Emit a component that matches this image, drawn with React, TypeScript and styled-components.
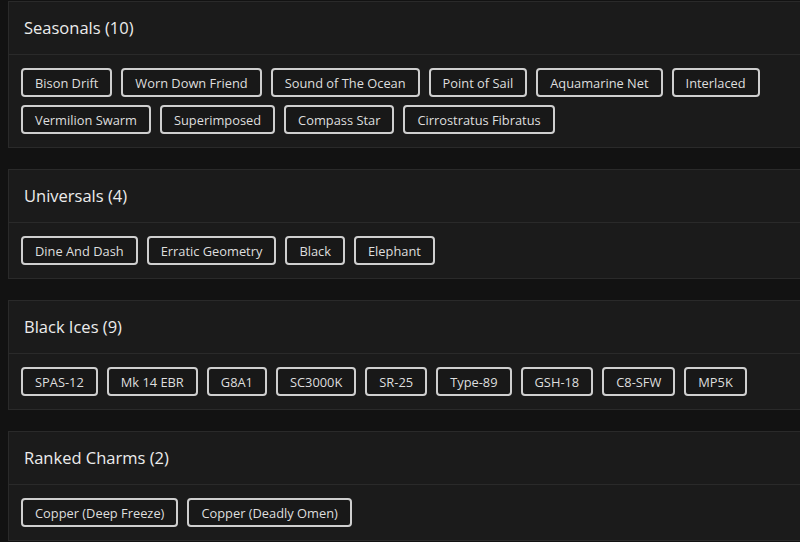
import React from "react";
import styled, { createGlobalStyle } from "styled-components";

type Group = {
  title: string;
  items: string[];
};

const groups: Group[] = [
  {
    title: "Seasonals",
    items: [
      "Bison Drift",
      "Worn Down Friend",
      "Sound of The Ocean",
      "Point of Sail",
      "Aquamarine Net",
      "Interlaced",
      "Vermilion Swarm",
      "Superimposed",
      "Compass Star",
      "Cirrostratus Fibratus",
    ],
  },
  {
    title: "Universals",
    items: ["Dine And Dash", "Erratic Geometry", "Black", "Elephant"],
  },
  {
    title: "Black Ices",
    items: [
      "SPAS-12",
      "Mk 14 EBR",
      "G8A1",
      "SC3000K",
      "SR-25",
      "Type-89",
      "GSH-18",
      "C8-SFW",
      "MP5K",
    ],
  },
  {
    title: "Ranked Charms",
    items: ["Copper (Deep Freeze)", "Copper (Deadly Omen)"],
  },
];

const GlobalStyle = createGlobalStyle`
  html, body {
    margin: 0;
    background: #121212;
    overflow: hidden;
  }
  body {
    padding: 1px 0 0 8px;
    font-family: "Open Sans", "Liberation Sans", sans-serif;
  }
`;

const List = styled.div`
  display: flex;
  flex-direction: column;
  gap: 21px;
  width: 830px;
`;

const Card = styled.section`
  background: #1b1b1b;
  border: 1px solid #2a2a2a;
`;

const Header = styled.div`
  height: 50px;
  display: flex;
  align-items: center;
  padding: 0 15px 2px;
  border-bottom: 1px solid #2a2a2a;
  color: #ececec;
  font-size: 16.5px;
  font-weight: 500;
`;

const Body = styled.div`
  display: flex;
  flex-wrap: wrap;
  gap: 8px 9px;
  padding: 13px 12px;
  max-width: 780px;
`;

const Tag = styled.span`
  box-sizing: border-box;
  height: 29px;
  display: inline-flex;
  align-items: center;
  padding: 0 12px;
  border: 2px solid #cfcfcf;
  border-radius: 4px;
  background: #181818;
  color: #dedede;
  font-size: 12.85px;
  white-space: nowrap;
`;

export default function App() {
  return (
    <>
      <GlobalStyle />
      <List>
        {groups.map((g) => (
          <Card key={g.title}>
            <Header>
              {g.title} ({g.items.length})
            </Header>
            <Body>
              {g.items.map((item) => (
                <Tag key={item}>{item}</Tag>
              ))}
            </Body>
          </Card>
        ))}
      </List>
    </>
  );
}
